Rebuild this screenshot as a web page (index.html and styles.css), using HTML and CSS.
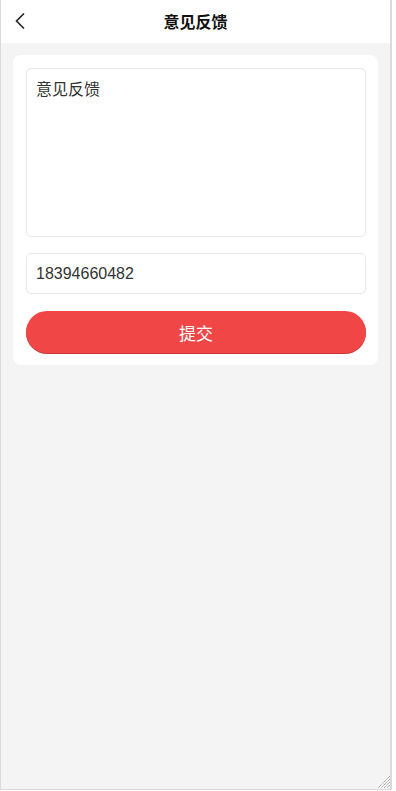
FILE: index.html
```html
<!DOCTYPE html>
<html lang="zh">
<head>
<meta charset="utf-8">
<title>意见反馈</title>
<link rel="stylesheet" href="styles.css">
</head>
<body>
<div class="frame">
  <header class="topbar">
    <span class="back">
      <svg width="12" height="18" viewBox="0 0 12 18"><path d="M10 1.5 L2.5 9 L10 16.5" fill="none" stroke="#222" stroke-width="1.6"/></svg>
    </span>
    <h1 class="title">意见反馈</h1>
  </header>
  <main class="card">
    <div class="textarea">意见反馈</div>
    <div class="input">18394660482</div>
    <button class="submit">提交</button>
  </main>
  <svg class="grip" width="13" height="13" viewBox="0 0 13 13">
    <g stroke="#9a9a9a" stroke-width="1" stroke-dasharray="1.2 0.6">
      <path d="M13 1 L1 13"/>
      <path d="M13 4 L4 13"/>
      <path d="M13 7 L7 13"/>
      <path d="M13 10 L10 13"/>
    </g>
  </svg>
</div>
</body>
</html>
```
FILE: styles.css
```css
* { box-sizing: border-box; }
html, body { margin: 0; padding: 0; background: #fff; }
body { font-family: "Liberation Sans", Arial, "Noto Sans CJK SC", sans-serif; }
.frame {
  position: relative;
  width: 392px;
  height: 790px;
  border: 1px solid #dadada;
  border-top: none;
  border-right-width: 2px;
  background: #f4f4f4;
  overflow: hidden;
}
.topbar {
  height: 43px;
  background: #fff;
  display: flex;
  align-items: center;
  justify-content: center;
  position: relative;
}
.back {
  position: absolute;
  left: 13px;
  top: 12px;
  display: flex;
}
.title {
  margin: 0;
  font-size: 16px;
  font-weight: bold;
  color: #111;
  font-family: "Noto Sans CJK SC", sans-serif;
  line-height: 43px;
}
.card {
  margin: 12px 12px 0;
  background: #fff;
  border-radius: 8px;
  padding: 13px 12px 12px 13px;
  display: flex;
  flex-direction: column;
}
.textarea {
  height: 169px;
  border: 1px solid #e6e6e6;
  border-radius: 5px;
  padding: 8px 9px;
  font-size: 16px;
  color: #333;
  font-family: "Noto Sans CJK SC", sans-serif;
  line-height: 22px;
}
.input {
  margin-top: 16px;
  height: 41px;
  border: 1px solid #e6e6e6;
  border-radius: 5px;
  padding: 0 9px;
  font-size: 16px;
  color: #333;
  display: flex;
  align-items: center;
}
.submit {
  margin-top: 17px;
  height: 42px;
  border: none;
  border-radius: 21px;
  background: #f04646;
  color: #fff;
  font-size: 17px;
  font-family: "Noto Sans CJK SC", sans-serif;
  box-shadow: 0 1px 0 #c83a3a;
  padding: 0;
}
.grip {
  position: absolute;
  right: 0;
  bottom: 1px;
}
```
